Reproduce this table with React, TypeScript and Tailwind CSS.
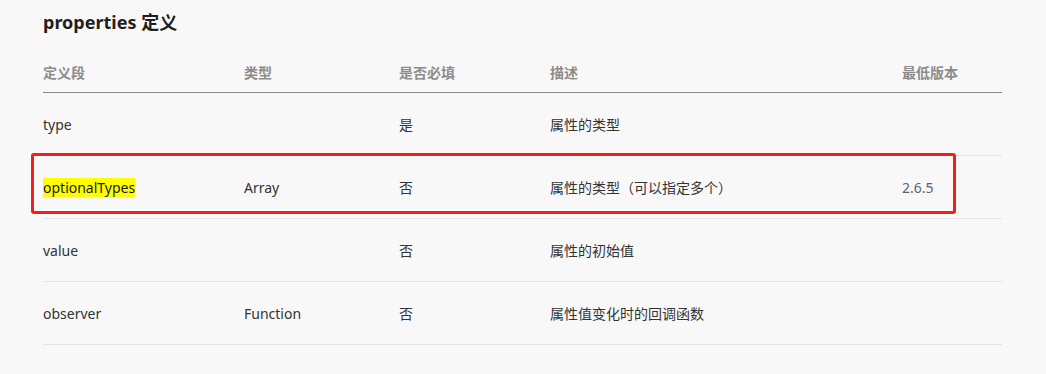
const cols = ["w-[201px]", "w-[155px]", "w-[151px]", "w-[352px]", "flex-1"];

const headers = ["定义段", "类型", "是否必填", "描述", "最低版本"];

const rows = [
    ["type", "", "是", "属性的类型", ""],
    ["optionalTypes", "Array", "否", "属性的类型（可以指定多个）", "2.6.5"],
    ["value", "", "否", "属性的初始值", ""],
    ["observer", "Function", "否", "属性值变化时的回调函数", ""],
];

const App = () => {
    return (
        <div className="w-[1046px] h-[374px] bg-[#f8f8f8] pl-[43px] pr-[44px] pt-[10px] font-['Segoe_UI','Noto_Sans','Noto_Sans_CJK_SC',sans-serif] text-[#333]">
            <h2 className="text-[18px] leading-[24px] font-bold text-[#1f1f1f] h-[43px]">properties 定义</h2>
            <div className="flex h-[40px] items-center border-b border-[#8a8a8a] text-[14px] font-bold text-[#8c8c8c]">
                {headers.map((h, i) => (
                    <div key={h} className={cols[i]}>{h}</div>
                ))}
            </div>
            {rows.map((r, ri) => (
                <div key={ri} className="relative flex h-[63px] items-center border-b border-[#e3e3e3] text-[14px]">
                    {r.map((c, i) => (
                        <div key={i} className={cols[i]}>
                            {ri === 1 && i === 0 ? (
                                <span className="bg-[#ffff00] text-[#1a1a1a]">{c}</span>
                            ) : i === 4 ? (
                                <span className="text-[#5a6478]">{c}</span>
                            ) : (
                                c
                            )}
                        </div>
                    ))}
                    {ri === 1 && (
                        <div className="absolute left-[-12px] right-[46px] top-[-3px] h-[61px] border-[3px] border-[#f21d1d] rounded-[3px]"></div>
                    )}
                </div>
            ))}
        </div>
    );
};

export default App;
